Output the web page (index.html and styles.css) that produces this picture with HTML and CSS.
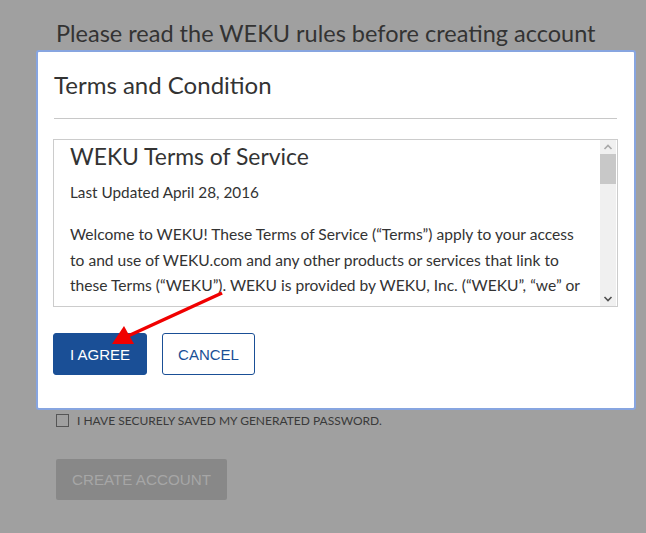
FILE: index.html
```html
<!DOCTYPE html>
<html>
<head>
<meta charset="utf-8">
<link rel="stylesheet" href="styles.css">
</head>
<body>
<div class="page">
  <h1 class="page-title">Please read the WEKU rules before creating account</h1>
  <label class="check-row"><span class="checkbox"></span><span class="check-label">I have securely saved my generated password.</span></label>
  <button class="create-btn">CREATE ACCOUNT</button>
</div>

<div class="modal">
  <h2 class="modal-title">Terms and Condition</h2>
  <hr class="modal-rule">
  <div class="terms-box">
    <div class="terms-content">
      <h3 class="terms-title">WEKU Terms of Service</h3>
      <p class="terms-date">Last Updated April 28, 2016</p>
      <p class="terms-text">Welcome to WEKU! These Terms of Service (“Terms”) apply to your access<br>to and use of WEKU.com and any other products or services that link to<br>these Terms (“WEKU”). WEKU is provided by WEKU, Inc. (“WEKU”, “we” or</p>
    </div>
    <div class="scrollbar">
      <svg class="sb-arrow" width="16" height="14" viewBox="0 0 16 14"><path d="M4.5 9 L8 5.5 L11.5 9" fill="none" stroke="#a8a8a8" stroke-width="1.6"/></svg>
      <div class="sb-thumb"></div>
      <div class="sb-track"></div>
      <svg class="sb-arrow" width="16" height="14" viewBox="0 0 16 14"><path d="M4.5 5 L8 8.5 L11.5 5" fill="none" stroke="#505050" stroke-width="1.6"/></svg>
    </div>
  </div>
  <div class="modal-actions">
    <button class="btn btn-primary">I AGREE</button>
    <button class="btn btn-outline">CANCEL</button>
  </div>
</div>

<svg class="arrow" width="646" height="533" viewBox="0 0 646 533">
  <line x1="222" y1="293" x2="128" y2="336" stroke="#f00000" stroke-width="3.5"/>
  <polygon points="112,344 124,326 134,344" fill="#f00000"/>
</svg>
</body>
</html>
```

FILE: styles.css
```css
html, body {
  margin: 0;
  padding: 0;
}
body {
  background: #a0a0a0;
  width: 646px;
  height: 533px;
  overflow: hidden;
  position: relative;
  font-family: "Lato", "Open Sans", sans-serif;
  color: #333;
}
.page {
  padding: 17px 0 0 56px;
  display: flex;
  flex-direction: column;
  align-items: flex-start;
}
.page-title {
  margin: 0;
  font-size: 23.5px;
  font-weight: 400;
  line-height: 32px;
  color: #333;
}
.check-row {
  margin-top: 363px;
  display: flex;
  align-items: center;
  gap: 8px;
  height: 16px;
}
.checkbox {
  width: 11px;
  height: 11px;
  border: 1px solid #555;
  box-sizing: content-box;
}
.check-label {
  text-transform: uppercase;
  font-size: 12px;
  color: #3a3a3a;
}
.create-btn {
  margin-top: 31px;
  width: 171px;
  height: 41px;
  background: #888;
  color: #a6a6a6;
  border: none;
  border-radius: 2px;
  font-family: "Liberation Sans", Arial, sans-serif;
  font-size: 15.2px;
  padding: 0;
}

.modal {
  position: absolute;
  left: 36px;
  top: 50px;
  width: 600px;
  height: 360px;
  box-sizing: border-box;
  background: #fff;
  border: 2px solid #87a5e0;
  border-radius: 3px;
  padding: 0 16px 0 15px;
  display: flex;
  flex-direction: column;
}
.modal-title {
  margin: 19px 0 0 1px;
  font-size: 24px;
  font-weight: 400;
  line-height: 27px;
  color: #333;
}
.modal-rule {
  margin: 20px 0 0 1px;
  border: none;
  border-top: 1px solid #c8c8c8;
  height: 0;
  width: 563px;
}
.terms-box {
  margin-top: 20px;
  height: 168px;
  border: 1px solid #ccc;
  box-sizing: border-box;
  display: flex;
}
.terms-content {
  flex: 1;
  overflow: hidden;
  padding: 3px 2px 0 16px;
}
.terms-title {
  margin: 0;
  font-size: 22.9px;
  font-weight: 400;
  line-height: 27px;
  color: #333;
}
.terms-date {
  margin: 12px 0 0;
  font-size: 15.3px;
  line-height: 20px;
}
.terms-text {
  margin: 20px 0 0;
  font-size: 15.6px;
  line-height: 25.5px;
  white-space: nowrap;
}
.scrollbar {
  width: 16px;
  background: #f0f0f0;
  display: flex;
  flex-direction: column;
  margin-right: 1px;
}
.sb-arrow {
  display: block;
  flex: none;
}
.sb-thumb {
  height: 30px;
  background: #c8c8c8;
  flex: none;
}
.sb-track {
  flex: 1;
}
.modal-actions {
  margin-top: 26px;
  display: flex;
  gap: 15px;
}
.btn {
  height: 42px;
  border-radius: 3px;
  font-family: "Liberation Sans", Arial, sans-serif;
  font-size: 15px;
  padding: 0;
  box-sizing: border-box;
}
.btn-primary {
  width: 94px;
  background: #1a4f96;
  color: #fff;
  border: 1px solid #1a4f96;
}
.btn-outline {
  width: 93px;
  background: #fff;
  color: #1a4f96;
  border: 1px solid #1a4f96;
}
.arrow {
  position: absolute;
  left: 0;
  top: 0;
  pointer-events: none;
}
```
